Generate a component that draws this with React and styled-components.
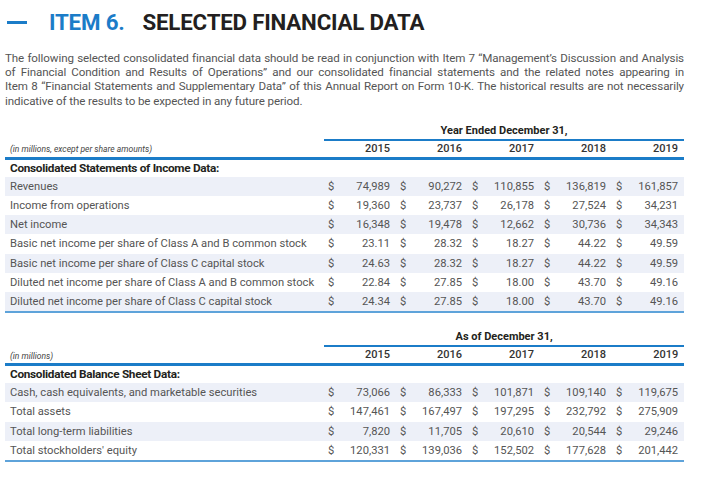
import React from 'react';
import styled, { createGlobalStyle } from 'styled-components';

const GlobalStyle = createGlobalStyle`
    html, body {
        margin: 0;
        padding: 0;
        background: #fff;
    }
    body {
        font-family: Roboto, "Liberation Sans", sans-serif;
        color: #555;
    }
`;

const BLUE = '#1b7cc8';

const YEARS = ['2015', '2016', '2017', '2018', '2019'];

const introLines = [
    'The following selected consolidated financial data should be read in conjunction with Item 7 \u201CManagement\u2019s Discussion and Analysis',
    'of Financial Condition and Results of Operations\u201D and our consolidated financial statements and the related notes appearing in',
    'Item 8 \u201CFinancial Statements and Supplementary Data\u201D of this Annual Report on Form 10-K. The historical results are not necessarily',
    'indicative of the results to be expected in any future period.'
];

const incomeRows = [
    { label: 'Revenues', values: ['74,989', '90,272', '110,855', '136,819', '161,857'] },
    { label: 'Income from operations', values: ['19,360', '23,737', '26,178', '27,524', '34,231'] },
    { label: 'Net income', values: ['16,348', '19,478', '12,662', '30,736', '34,343'] },
    { label: 'Basic net income per share of Class A and B common stock', values: ['23.11', '28.32', '18.27', '44.22', '49.59'] },
    { label: 'Basic net income per share of Class C capital stock', values: ['24.63', '28.32', '18.27', '44.22', '49.59'] },
    { label: 'Diluted net income per share of Class A and B common stock', values: ['22.84', '27.85', '18.00', '43.70', '49.16'] },
    { label: 'Diluted net income per share of Class C capital stock', values: ['24.34', '27.85', '18.00', '43.70', '49.16'] }
];

const balanceRows = [
    { label: 'Cash, cash equivalents, and marketable securities', values: ['73,066', '86,333', '101,871', '109,140', '119,675'] },
    { label: 'Total assets', values: ['147,461', '167,497', '197,295', '232,792', '275,909'] },
    { label: 'Total long-term liabilities', values: ['7,820', '11,705', '20,610', '20,544', '29,246'] },
    { label: "Total stockholders' equity", values: ['120,331', '139,036', '152,502', '177,628', '201,442'] }
];

const FinTable = ({ period, unitNote, section, rows, spaceTop }) => (
    <Table $spaceTop={spaceTop}>
        <colgroup>
            <col style={{ width: 319 }} />
            {YEARS.map(y => (
                <React.Fragment key={y}>
                    <col style={{ width: 16 }} />
                    <col style={{ width: 56 }} />
                </React.Fragment>
            ))}
        </colgroup>
        <thead>
            <tr>
                <th />
                <PeriodCell colSpan={10}>{period}</PeriodCell>
            </tr>
            <YearRow>
                <NoteCell>{unitNote}</NoteCell>
                {YEARS.map(y => (
                    <YearCell key={y} colSpan={2}>{y}</YearCell>
                ))}
            </YearRow>
        </thead>
        <tbody>
            <tr>
                <SectionCell colSpan={11}>{section}</SectionCell>
            </tr>
            {rows.map((row, i) => (
                <DataRow key={row.label} $shaded={i % 2 === 0} $last={i === rows.length - 1}>
                    <LabelCell>{row.label}</LabelCell>
                    {row.values.map((v, j) => (
                        <React.Fragment key={j}>
                            <DollarCell>$</DollarCell>
                            <ValueCell>{v}</ValueCell>
                        </React.Fragment>
                    ))}
                </DataRow>
            ))}
        </tbody>
    </Table>
);

export default function App () {
    return (
        <Page>
            <GlobalStyle />
            <Title>
                <Dash />
                <ItemNo>ITEM 6.</ItemNo>
                <TitleText>SELECTED FINANCIAL DATA</TitleText>
            </Title>
            <Intro>
                {introLines.map((line, i) => (
                    <IntroLine key={i} $last={i === introLines.length - 1}>{line}</IntroLine>
                ))}
            </Intro>
            <FinTable
                spaceTop={16}
                period="Year Ended December 31,"
                unitNote="(in millions, except per share amounts)"
                section="Consolidated Statements of Income Data:"
                rows={incomeRows}
            />
            <FinTable
                spaceTop={17}
                period="As of December 31,"
                unitNote="(in millions)"
                section="Consolidated Balance Sheet Data:"
                rows={balanceRows}
            />
        </Page>
    );
}

const Page = styled.main`
    width: 679px;
    padding: 8px 0 0 5px;
`;

const Title = styled.h1`
    display: flex;
    align-items: center;
    margin: 0;
    font-size: 22.3px;
    font-weight: 700;
    line-height: 28px;
    letter-spacing: -0.2px;
`;

const Dash = styled.span`
    width: 20px;
    height: 3px;
    margin: 1px 22px 0 2px;
    background: ${BLUE};
`;

const ItemNo = styled.span`
    color: ${BLUE};
`;

const TitleText = styled.span`
    margin-left: 18px;
    color: #231f20;
`;

const Intro = styled.p`
    margin: 15px 0 0;
    font-size: 11.6px;
    line-height: 14.2px;
    letter-spacing: -0.1px;
    color: #555;
`;

const IntroLine = styled.span`
    display: block;
    white-space: nowrap;
    text-align: justify;
    text-align-last: ${p => (p.$last ? 'left' : 'justify')};
`;

const Table = styled.table`
    width: 679px;
    margin-top: ${p => p.$spaceTop}px;
    border-collapse: collapse;
    table-layout: fixed;
    font-size: 11px;
`;

const PeriodCell = styled.th`
    padding: 0 0 1px;
    text-align: center;
    font-size: 11px;
    font-weight: 700;
    line-height: 14px;
    color: #231f20;
    border-bottom: 2px solid ${BLUE};
`;

const YearRow = styled.tr`
    border-bottom: 3px solid ${BLUE};
`;

const NoteCell = styled.th`
    padding: 3px 0 0 5px;
    text-align: left;
    font-size: 8.5px;
    font-style: italic;
    font-weight: 400;
    line-height: 13px;
    color: #444;
    white-space: nowrap;
`;

const YearCell = styled.th`
    padding: 1px 6px 1px 0;
    text-align: right;
    font-size: 11px;
    font-weight: 500;
    line-height: 14px;
    color: #333;
`;

const SectionCell = styled.td`
    padding: 1px 0 2px 5px;
    font-size: 11.8px;
    font-weight: 700;
    letter-spacing: -0.3px;
    line-height: 14px;
    color: #231f20;
`;

const DataRow = styled.tr`
    background: ${p => (p.$shaded ? '#edf0f8' : 'transparent')};
    border-bottom: ${p => (p.$last ? '2px solid #5ea3da' : 'none')};
    td {
        height: 19.2px;
        padding-top: 0;
        padding-bottom: 0;
        line-height: 19.2px;
        white-space: nowrap;
    }
`;

const LabelCell = styled.td`
    padding-left: 5px;
    font-size: 11.2px;
    color: #555;
`;

const DollarCell = styled.td`
    padding-left: 4px;
    font-size: 11.2px;
    color: #555;
`;

const ValueCell = styled.td`
    padding-right: 6px;
    text-align: right;
    font-size: 11.2px;
    color: #555;
`;
